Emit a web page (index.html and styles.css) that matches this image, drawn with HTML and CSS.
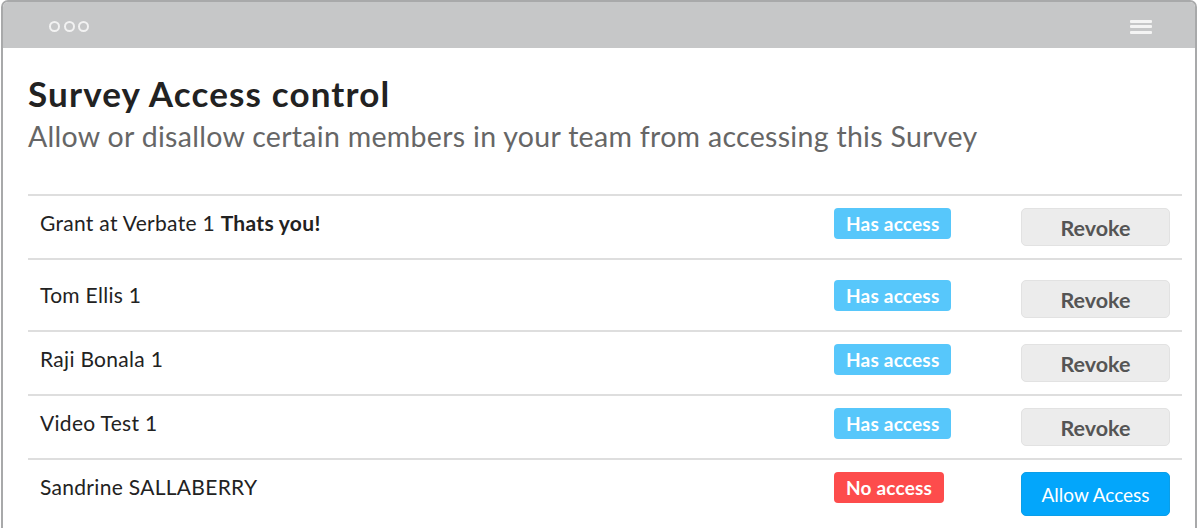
FILE: index.html
```html
<!DOCTYPE html>
<html>
<head>
<meta charset="utf-8">
<link rel="stylesheet" href="styles.css">
</head>
<body>
<div class="window">
  <div class="titlebar">
    <div class="dots"><span class="dot"></span><span class="dot"></span><span class="dot"></span></div>
    <div class="menu"><span></span><span></span><span></span></div>
  </div>
  <div class="content">
    <h1 class="title">Survey Access control</h1>
    <p class="subtitle">Allow or disallow certain members in your team from accessing this Survey</p>
    <div class="table">
      <div class="row">
        <div class="name">Grant at Verbate 1 <b>Thats you!</b></div>
        <div class="status"><span class="badge badge-yes">Has access</span></div>
        <div class="action"><button class="btn btn-revoke">Revoke</button></div>
      </div>
      <div class="row row-tall">
        <div class="name">Tom Ellis 1</div>
        <div class="status"><span class="badge badge-yes">Has access</span></div>
        <div class="action"><button class="btn btn-revoke">Revoke</button></div>
      </div>
      <div class="row">
        <div class="name">Raji Bonala 1</div>
        <div class="status"><span class="badge badge-yes">Has access</span></div>
        <div class="action"><button class="btn btn-revoke">Revoke</button></div>
      </div>
      <div class="row">
        <div class="name">Video Test 1</div>
        <div class="status"><span class="badge badge-yes">Has access</span></div>
        <div class="action"><button class="btn btn-revoke">Revoke</button></div>
      </div>
      <div class="row">
        <div class="name">Sandrine SALLABERRY</div>
        <div class="status"><span class="badge badge-no">No access</span></div>
        <div class="action"><button class="btn btn-allow">Allow Access</button></div>
      </div>
    </div>
  </div>
</div>
</body>
</html>
```
FILE: styles.css
```css
html, body {
  margin: 0;
  padding: 0;
  background: #ffffff;
  font-family: Lato, "Liberation Sans", sans-serif;
}
.window {
  box-sizing: border-box;
  width: 1196px;
  height: 528px;
  margin-left: 1px;
  border: 2px solid #a8a9aa;
  border-bottom: none;
  border-radius: 7px 7px 0 0;
  overflow: hidden;
  background: #ffffff;
}
.titlebar {
  height: 46px;
  background: #c6c7c8;
  display: flex;
  align-items: center;
  justify-content: space-between;
  padding: 0 43px 0 46px;
}
.dots {
  display: flex;
  gap: 3.5px;
  margin-top: 2px;
}
.dot {
  box-sizing: border-box;
  width: 11px;
  height: 11px;
  border: 2px solid #f2f2f2;
  border-radius: 50%;
}
.menu {
  display: flex;
  flex-direction: column;
  gap: 2.5px;
  width: 22px;
  margin-top: 3px;
}
.menu span {
  display: block;
  height: 3px;
  border-radius: 1px;
  background: #f4f4f4;
}
.content {
  padding: 25px 13px 0 25px;
}
.title {
  margin: 0;
  font-size: 35px;
  line-height: 41px;
  font-weight: 700;
  letter-spacing: 1.15px;
  color: #222222;
}
.subtitle {
  margin: 5px 0 0;
  font-size: 28.5px;
  line-height: 34px;
  font-weight: 400;
  letter-spacing: 0.3px;
  color: #666666;
}
.table {
  margin-top: 41px;
}
.row {
  display: grid;
  grid-template-columns: 1fr 187px 149px;
  align-items: start;
  border-top: 2px solid #dedede;
  padding: 12px 12px 12px;
}
.row-tall {
  padding-top: 20px;
}
.name {
  font-size: 21px;
  line-height: 29px;
  letter-spacing: 0.3px;
  color: #222222;
}
.name b {
  font-weight: 700;
}
.badge {
  display: inline-block;
  height: 31px;
  line-height: 31px;
  padding: 0 12px;
  border-radius: 4px;
  color: #ffffff;
  font-size: 19px;
  letter-spacing: 0.2px;
  font-weight: 700;
}
.badge-yes {
  background: #57c7fb;
}
.badge-no {
  background: #fd4c4c;
}
.btn {
  box-sizing: border-box;
  width: 149px;
  font-family: Lato, "Liberation Sans", sans-serif;
  border-radius: 5px;
  cursor: pointer;
}
.btn-revoke {
  height: 38px;
  background: #ececec;
  border: 1px solid #e2e2e2;
  color: #555555;
  font-size: 21.5px;
  font-weight: 700;
  padding-top: 3px;
}
.btn-allow {
  height: 44px;
  background: #03a6fb;
  border: 1px solid #0a9ee8;
  color: #ffffff;
  font-size: 19px;
  font-weight: 400;
}
```
